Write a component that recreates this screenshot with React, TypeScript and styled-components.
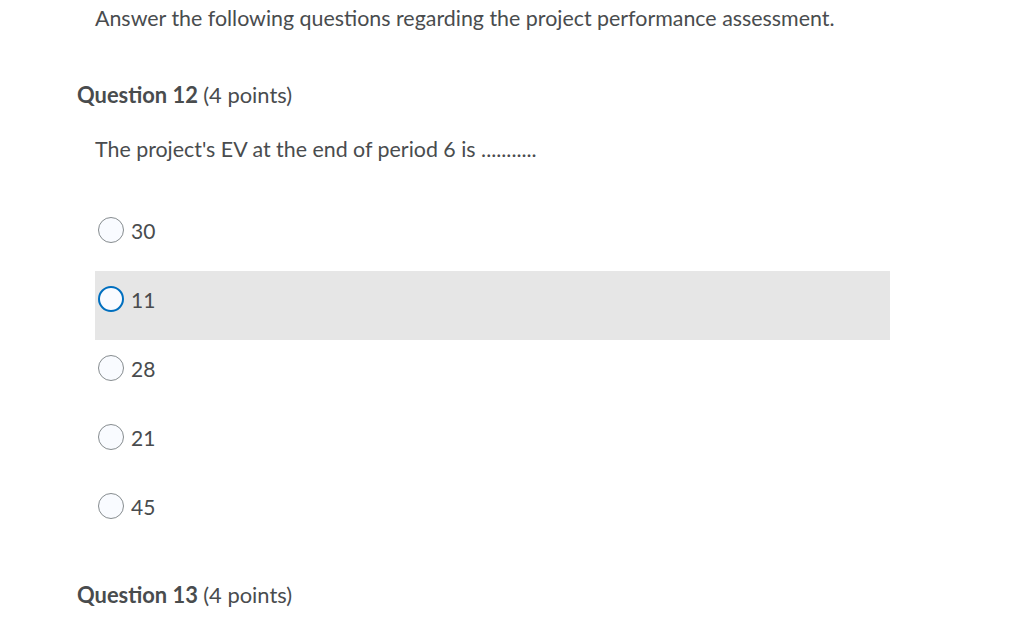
import React from "react";
import styled, { createGlobalStyle } from "styled-components";

const Global = createGlobalStyle`
  html, body { margin: 0; padding: 0; background: #fff; }
  body { font-family: Lato, "Open Sans", sans-serif; color: #494c4e; }
`;

const Page = styled.div`
  width: 1024px;
  height: 635px;
  overflow: hidden;
  box-sizing: border-box;
  padding: 6px 0 0 77px;
`;

const Intro = styled.p`
  margin: 0 0 0 18px;
  font-size: 21.4px;
  line-height: 24px;
`;

const Heading = styled.h2<{ $top: number }>`
  margin: ${(p) => p.$top}px 0 0 0;
  font-size: 21.9px;
  line-height: 24px;
  font-weight: 700;
  & span { font-weight: 400; }
`;

const QText = styled.p`
  margin: 30px 0 0 18px;
  font-size: 21.4px;
  line-height: 24px;
`;

const Options = styled.div`
  margin: 41px 0 0 18px;
  width: 795px;
`;

const Option = styled.label<{ $active?: boolean }>`
  display: flex;
  align-items: center;
  gap: 7px;
  height: 69px;
  box-sizing: border-box;
  padding: 15px 0 28px 3px;
  background: ${(p) => (p.$active ? "#e6e6e6" : "transparent")};
  font-size: 21px;
`;

const Radio = styled.span<{ $focus?: boolean }>`
  width: 26px;
  height: 26px;
  box-sizing: border-box;
  border-radius: 50%;
  background: #f9fbff;
  border: ${(p) => (p.$focus ? "2px solid #006fbf" : "1px solid #868c8f")};
  flex: none;
`;

const options = [
  { v: "30" },
  { v: "11", active: true },
  { v: "28" },
  { v: "21" },
  { v: "45" },
];

export default function App() {
  return (
    <>
      <Global />
      <Page>
        <Intro>Answer the following questions regarding the project performance assessment.</Intro>
        <Heading $top={53}>
          Question 12 <span>(4 points)</span>
        </Heading>
        <QText>The project's EV at the end of period 6 is ...........</QText>
        <Options>
          {options.map((o) => (
            <Option key={o.v} $active={o.active}>
              <Radio $focus={o.active} />
              {o.v}
            </Option>
          ))}
        </Options>
        <Heading $top={36}>
          Question 13 <span>(4 points)</span>
        </Heading>
      </Page>
    </>
  );
}
